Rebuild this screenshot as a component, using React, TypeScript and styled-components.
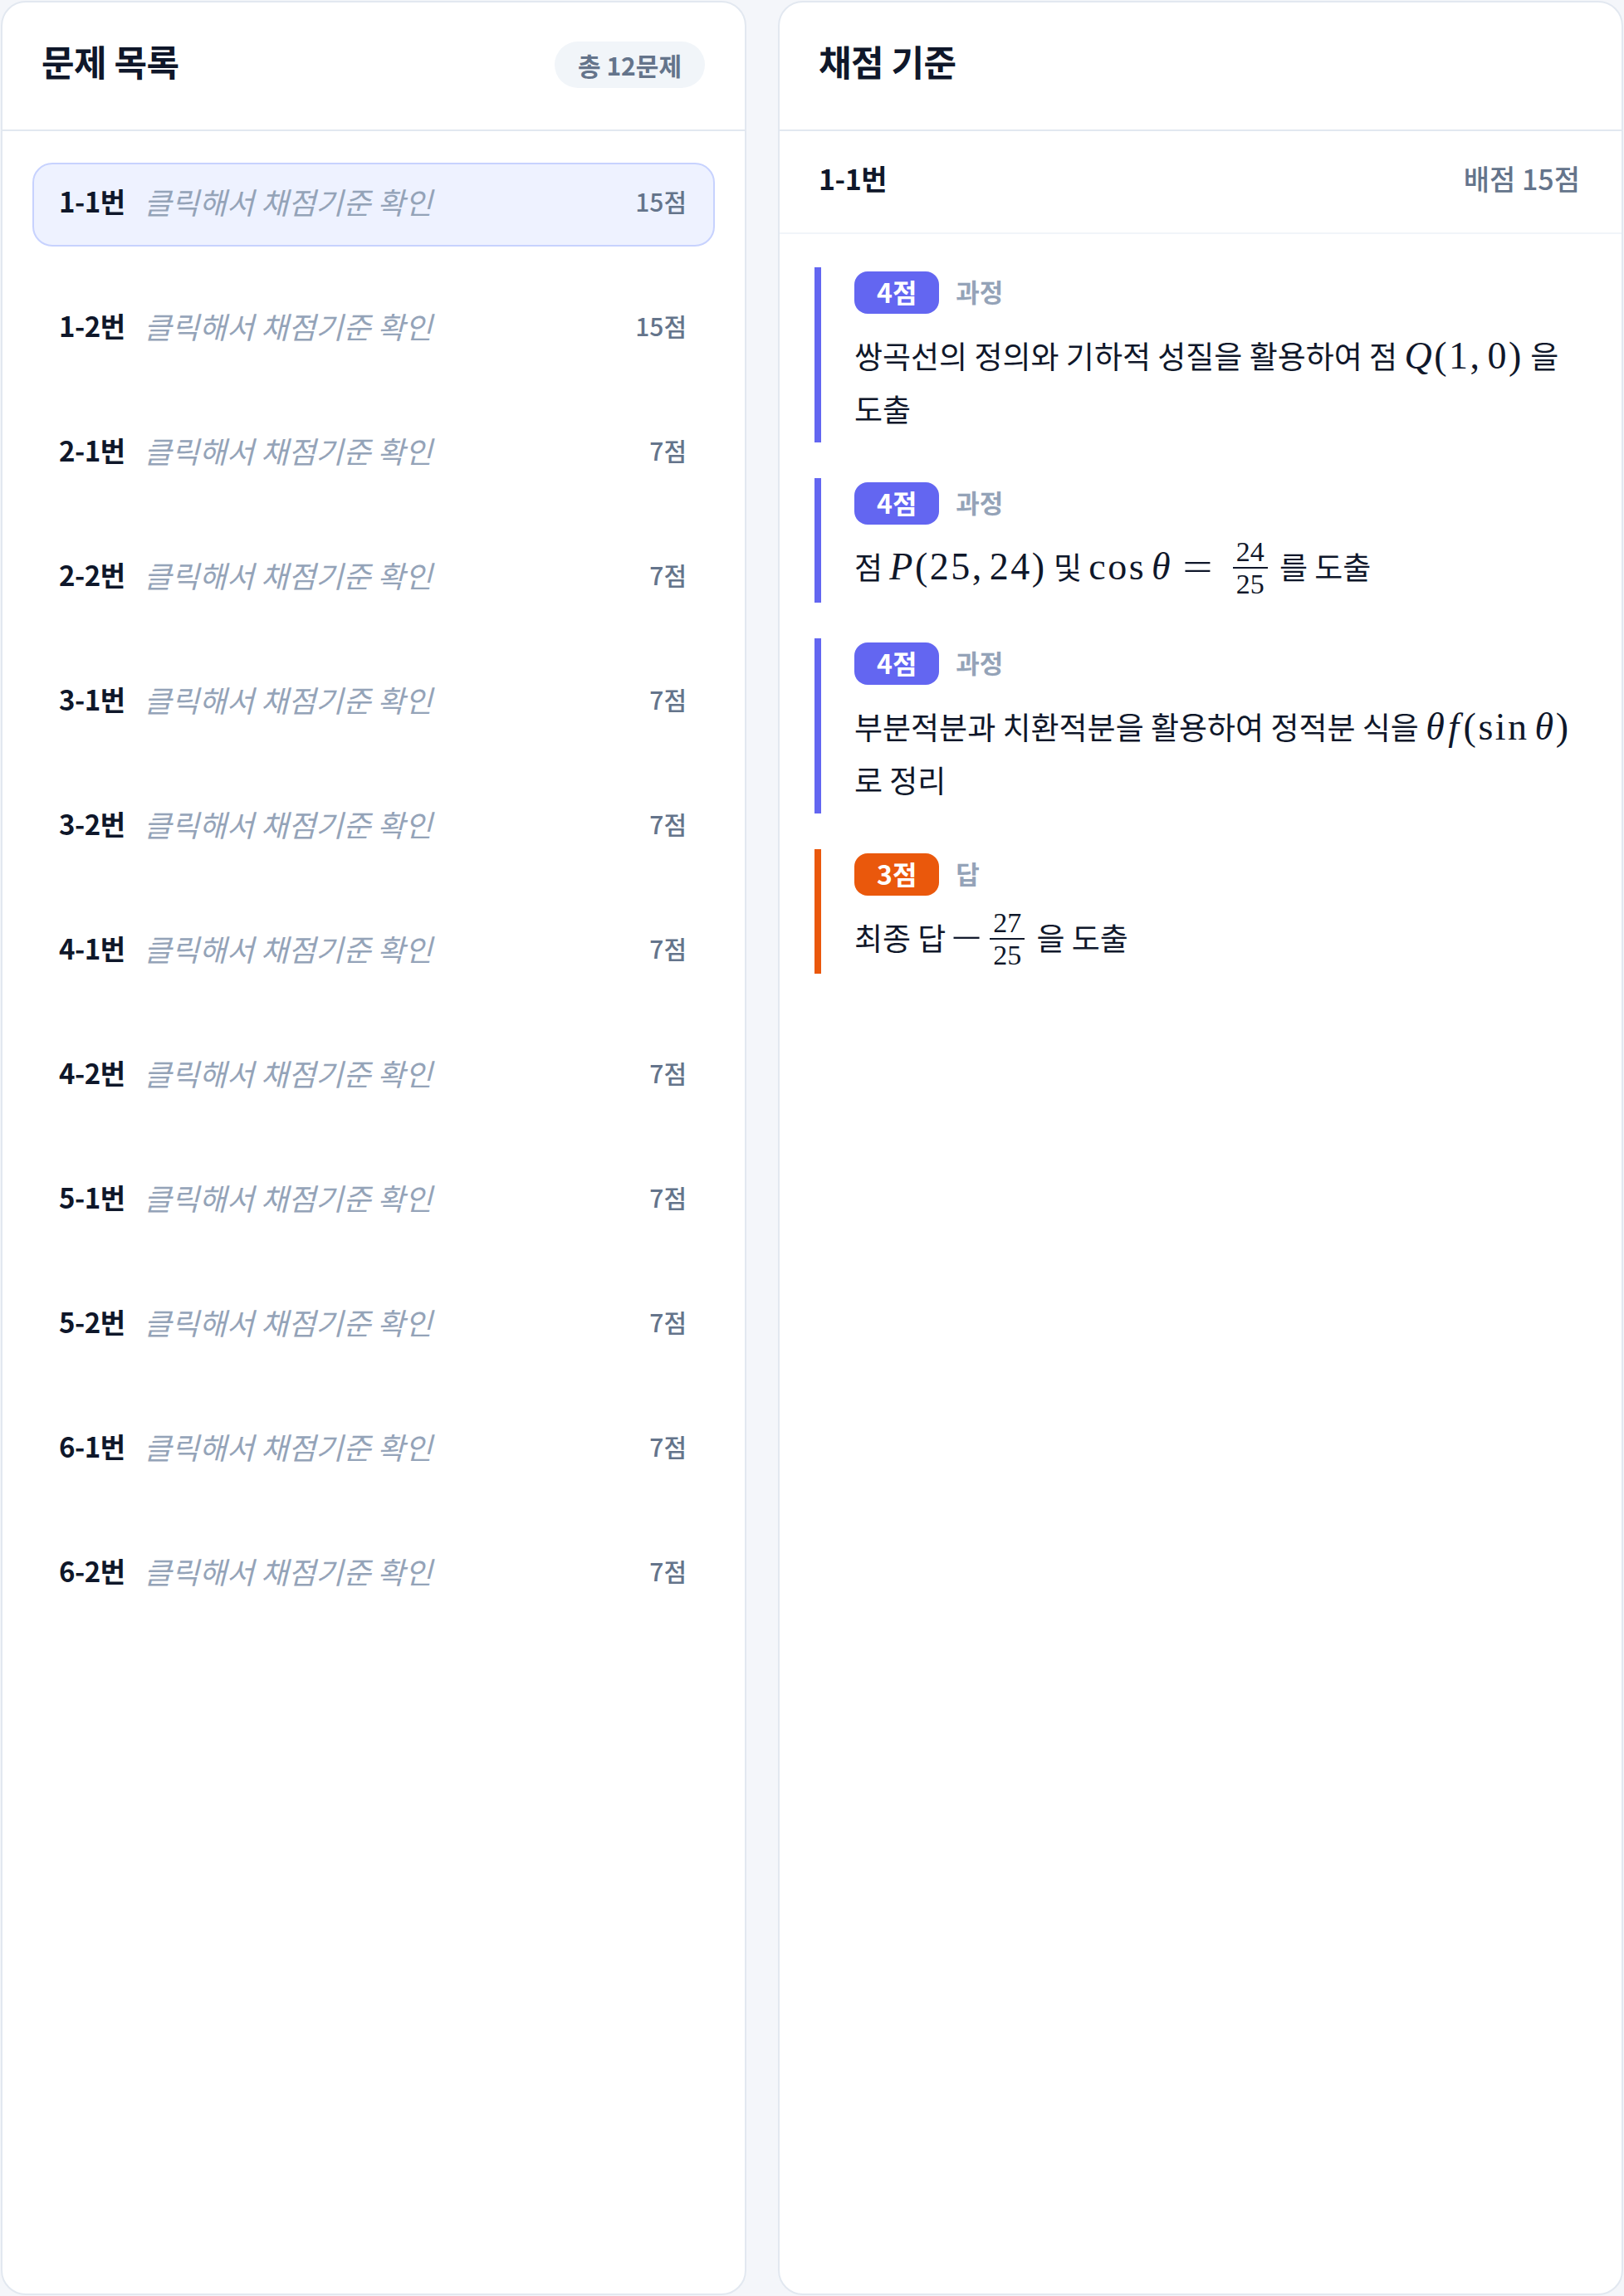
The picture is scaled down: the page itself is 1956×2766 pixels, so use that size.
import React from 'react';
import styled, { createGlobalStyle, css } from 'styled-components';

const GlobalStyle = createGlobalStyle`
  html, body {
    margin: 0;
    padding: 0;
    background: #f4f6fa;
  }
  body {
    font-family: "Noto Sans CJK KR", "Noto Sans", sans-serif;
    color: #0f172a;
  }
  *, *::before, *::after { box-sizing: border-box; }
`;

const Layout = styled.div`
  display: grid;
  grid-template-columns: 898px 1fr;
  gap: 38px;
  padding: 1px;
  height: 2766px;
`;

const Panel = styled.section`
  background: #ffffff;
  border: 2px solid #e2e8f0;
  border-radius: 30px;
  overflow: hidden;
  display: flex;
  flex-direction: column;
  min-height: 0;
`;

const PanelHeader = styled.header`
  flex: 0 0 auto;
  height: 155px;
  padding: 0 48px 13px 47px;
  display: flex;
  align-items: center;
  justify-content: space-between;
  border-bottom: 2px solid #e2e8f0;
`;

const PanelTitle = styled.h2`
  margin: 0;
  font-size: 43px;
  font-weight: 700;
  letter-spacing: -0.5px;
  color: #0f172a;
`;

const CountBadge = styled.span`
  height: 56px;
  padding: 0 28px;
  display: inline-flex;
  align-items: center;
  border-radius: 28px;
  background: #f1f5f9;
  color: #64748b;
  font-size: 30px;
  font-weight: 600;
  position: relative;
  top: 5px;
`;

const ProblemList = styled.ul`
  list-style: none;
  margin: 0;
  padding: 38px 36px;
  display: flex;
  flex-direction: column;
  gap: 49px;
`;

const ProblemRow = styled.li<{ $active?: boolean }>`
  height: 101px;
  padding: 0 32px 10px 30px;
  display: flex;
  align-items: center;
  gap: 23px;
  border: 2px solid transparent;
  border-radius: 24px;
  ${(p) =>
    p.$active &&
    css`
      background: #eef2ff;
      border-color: #c7d2fe;
    `}
`;

const ProblemLabel = styled.span`
  font-size: 33px;
  font-weight: 700;
  color: #0f172a;
  letter-spacing: -0.5px;
`;

const ProblemHint = styled.span`
  font-size: 36px;
  font-style: italic;
  color: #94a3b8;
`;

const ProblemPoints = styled.span`
  margin-left: auto;
  font-size: 30px;
  font-weight: 500;
  color: #64748b;
`;

const SubHeader = styled.div`
  flex: 0 0 auto;
  height: 124px;
  padding: 0 50px 10px 47px;
  display: flex;
  align-items: center;
  justify-content: space-between;
  border-bottom: 2px solid #f1f5f9;
`;

const SubTitle = styled.span`
  font-size: 34px;
  font-weight: 700;
  color: #0f172a;
  letter-spacing: -0.5px;
`;

const SubMeta = styled.span`
  font-size: 34px;
  font-weight: 500;
  color: #64748b;
`;

const CriteriaList = styled.div`
  padding: 40px 48px 0 42px;
  display: flex;
  flex-direction: column;
  gap: 43px;
`;

const toneColor = { process: '#6366f1', answer: '#ea580c' } as const;
type Tone = keyof typeof toneColor;

const CriterionBlock = styled.div<{ $tone: Tone }>`
  border-left: 8px solid ${(p) => toneColor[p.$tone]};
  padding: 5px 0 9px 40px;
`;

const CriterionHead = styled.div`
  height: 51px;
  display: flex;
  align-items: center;
  gap: 20px;
`;

const ScoreBadge = styled.span<{ $tone: Tone }>`
  height: 51px;
  padding: 0 27px 3px;
  display: inline-flex;
  align-items: center;
  border-radius: 16px;
  background: ${(p) => toneColor[p.$tone]};
  color: #ffffff;
  font-size: 32px;
  font-weight: 700;
`;

const KindLabel = styled.span`
  font-size: 31px;
  font-weight: 600;
  color: #94a3b8;
  position: relative;
  top: -2px;
`;

const CriterionText = styled.p`
  margin: 18px 0 0;
  font-size: 37px;
  line-height: 64px;
  color: #0f172a;
  word-break: keep-all;
`;

/* ---- math typesetting ---- */
const MathSpan = styled.span`
  font-family: "Liberation Serif", "Times New Roman", serif;
  font-size: 46px;
  line-height: 1;
  white-space: nowrap;
  letter-spacing: 2.5px;
`;

const MI = styled.span`
  font-style: italic;
`;

const Rel = styled.span`
  display: inline-block;
  margin: 0 20px 0 18px;
  transform: scaleX(1.4);
`;

const Minus = styled.span`
  display: inline-block;
  margin: 0 6px 0 4px;
  transform: scaleX(1.45);
`;

const Gap = styled.span<{ $w: number }>`
  display: inline-block;
  width: ${(p) => p.$w}px;
`;

const Frac = styled.span`
  display: inline-flex;
  flex-direction: column;
  align-items: center;
  vertical-align: middle;
  font-size: 34px;
  line-height: 0.95;
  letter-spacing: 0;
  margin: -6px 6px;
  position: relative;
  top: -3px;
`;

const FracNum = styled.span`
  padding: 0 4px 2px;
`;

const FracDen = styled.span`
  align-self: stretch;
  text-align: center;
  border-top: 2px solid #0f172a;
  padding: 3px 4px 0;
`;

const Fraction: React.FC<{ n: string; d: string }> = ({ n, d }) => (
  <Frac>
    <FracNum>{n}</FracNum>
    <FracDen>{d}</FracDen>
  </Frac>
);

type Criterion = {
  score: string;
  kind: string;
  tone: Tone;
  body: React.ReactNode;
};

const criteria: Criterion[] = [
  {
    score: '4점',
    kind: '과정',
    tone: 'process',
    body: (
      <>
        쌍곡선의 정의와 기하적 성질을 활용하여 점{' '}
        <MathSpan>
          <MI>Q</MI>(1,<Gap $w={7} />0)
        </MathSpan>{' '}
        을 도출
      </>
    ),
  },
  {
    score: '4점',
    kind: '과정',
    tone: 'process',
    body: (
      <>
        점{' '}
        <MathSpan>
          <MI>P</MI>(25,<Gap $w={7} />24)
        </MathSpan>{' '}
        및{' '}
        <MathSpan>
          cos<Gap $w={7} />
          <MI>θ</MI>
          <Rel>=</Rel>
          <Fraction n="24" d="25" />
        </MathSpan>{' '}
        를 도출
      </>
    ),
  },
  {
    score: '4점',
    kind: '과정',
    tone: 'process',
    body: (
      <>
        부분적분과 치환적분을 활용하여 정적분 식을{' '}
        <MathSpan>
          <MI>θ</MI>
          <Gap $w={2} />
          <MI>f</MI>
          <Gap $w={3} />(sin<Gap $w={7} />
          <MI>θ</MI>)
        </MathSpan>{' '}
        로 정리
      </>
    ),
  },
  {
    score: '3점',
    kind: '답',
    tone: 'answer',
    body: (
      <>
        최종 답{' '}
        <MathSpan>
          <Minus>−</Minus>
          <Fraction n="27" d="25" />
        </MathSpan>{' '}
        을 도출
      </>
    ),
  },
];

const problems: { id: string; points: number }[] = [
  { id: '1-1', points: 15 },
  { id: '1-2', points: 15 },
  { id: '2-1', points: 7 },
  { id: '2-2', points: 7 },
  { id: '3-1', points: 7 },
  { id: '3-2', points: 7 },
  { id: '4-1', points: 7 },
  { id: '4-2', points: 7 },
  { id: '5-1', points: 7 },
  { id: '5-2', points: 7 },
  { id: '6-1', points: 7 },
  { id: '6-2', points: 7 },
];

export default function App() {
  return (
    <>
      <GlobalStyle />
      <Layout>
        <Panel>
          <PanelHeader>
            <PanelTitle>문제 목록</PanelTitle>
            <CountBadge>총 12문제</CountBadge>
          </PanelHeader>
          <ProblemList>
            {problems.map((p, i) => (
              <ProblemRow key={p.id} $active={i === 0}>
                <ProblemLabel>{p.id}번</ProblemLabel>
                <ProblemHint>클릭해서 채점기준 확인</ProblemHint>
                <ProblemPoints>{p.points}점</ProblemPoints>
              </ProblemRow>
            ))}
          </ProblemList>
        </Panel>
        <Panel>
          <PanelHeader>
            <PanelTitle>채점 기준</PanelTitle>
          </PanelHeader>
          <SubHeader>
            <SubTitle>1-1번</SubTitle>
            <SubMeta>배점 15점</SubMeta>
          </SubHeader>
          <CriteriaList>
            {criteria.map((c, i) => (
              <CriterionBlock key={i} $tone={c.tone}>
                <CriterionHead>
                  <ScoreBadge $tone={c.tone}>{c.score}</ScoreBadge>
                  <KindLabel>{c.kind}</KindLabel>
                </CriterionHead>
                <CriterionText>{c.body}</CriterionText>
              </CriterionBlock>
            ))}
          </CriteriaList>
        </Panel>
      </Layout>
    </>
  );
}
